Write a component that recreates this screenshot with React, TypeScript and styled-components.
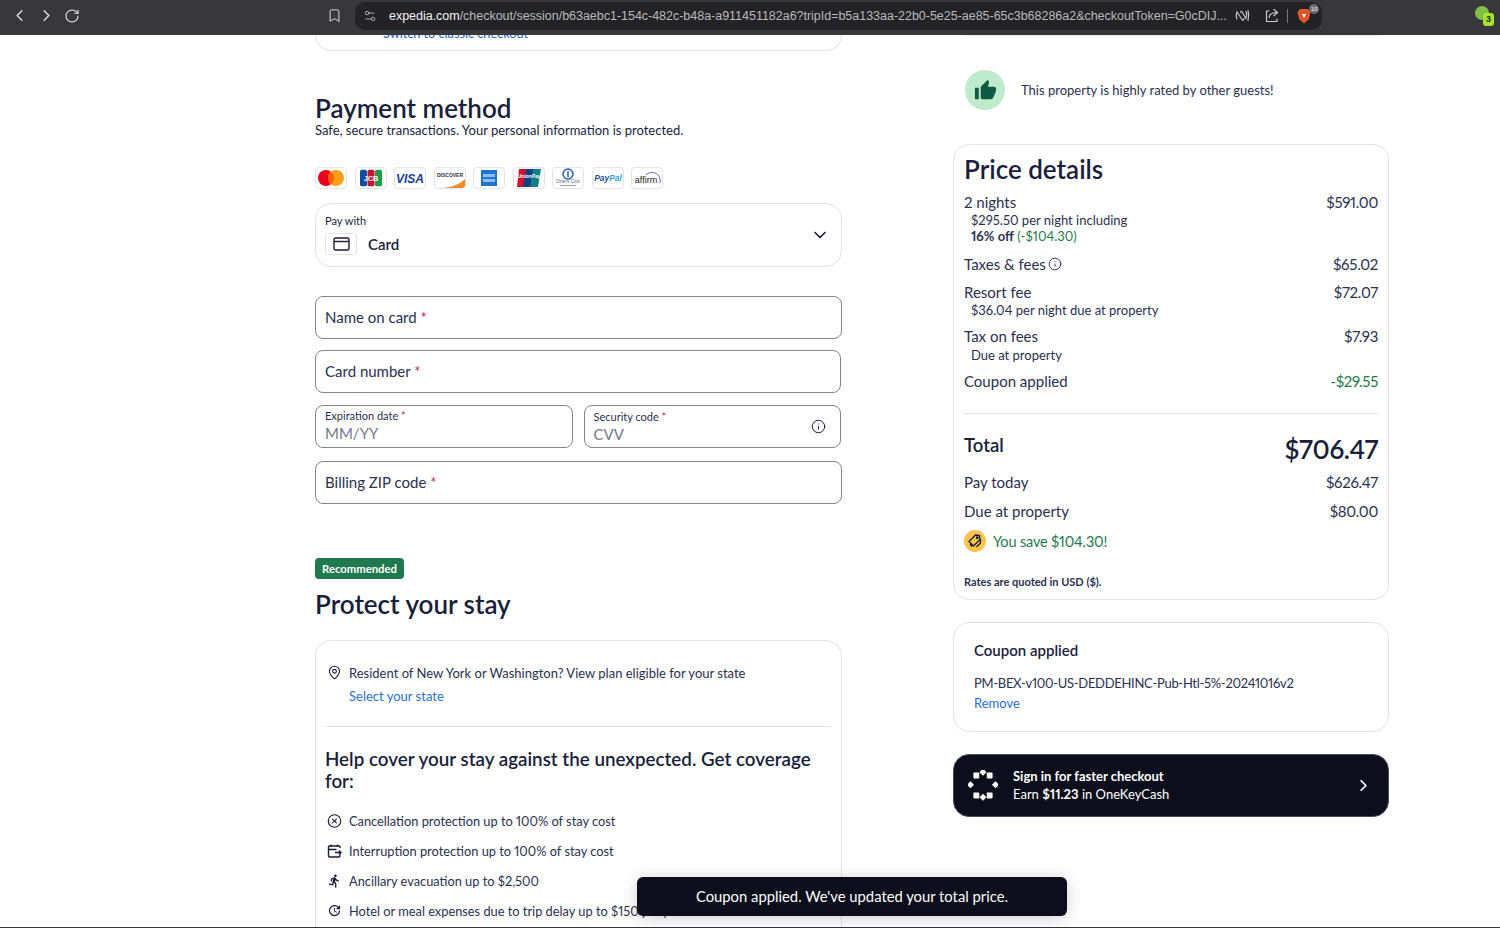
import styled, { createGlobalStyle } from "styled-components";
import {
  Bookmark,
  ChevronDown,
  ChevronLeft,
  ChevronRight,
  CircleX,
  Info,
  MapPin,
  RotateCw,
  Settings2,
} from "lucide-react";
import { MdDirectionsRun, MdThumbUp, MdUpdate } from "react-icons/md";

const FONT = `"Lato", "Noto Sans", sans-serif`;
const INK = "#191e3b";

const GlobalStyle = createGlobalStyle`
  html, body { margin: 0; padding: 0; background: #fff; height: 100%; overflow: hidden; }
  body { font-family: ${FONT}; color: ${INK}; font-variant-numeric: proportional-nums; }
  * { box-sizing: border-box; }
`;

const Page = styled.div`
  position: relative;
  width: 1500px;
  height: 928px;
  overflow: hidden;
  display: flex;
  flex-direction: column;
  border-bottom: 1px solid #33343a;
`;

const TopBar = styled.header`
  height: 35px;
  flex: none;
  background: #38383c;
  display: flex;
  align-items: center;
  padding: 0 6px 4px 10px;
  color: #e4e4e6;
`;

const NavIcons = styled.div`
  display: flex;
  align-items: center;
  gap: 8px;
  width: 317px;
`;

const UrlPill = styled.div`
  width: 967px;
  height: 28px;
  margin-left: 13px;
  background: #232327;
  border-radius: 10px;
  display: flex;
  align-items: center;
  padding: 0 3px 0 8px;
  font-family: "Liberation Sans", sans-serif;
  font-size: 12.5px;
  color: #b9b9bd;
  white-space: nowrap;
  overflow: hidden;
`;

const UrlText = styled.span`
  margin-left: 12px;
  flex: 1;
  letter-spacing: -0.02px;
  b { color: #f1f1f2; font-weight: 400; }
`;

const PillActions = styled.div`
  display: flex;
  align-items: center;
  gap: 14px;
`;

const PillDivider = styled.span`
  width: 1px;
  height: 14px;
  background: #77777c;
  margin: 0 9px 0 8px;
`;

const Shield = styled.div`
  position: relative;
  width: 22px;
  display: flex;
`;

const ShieldCount = styled.span`
  position: absolute;
  top: -4px;
  right: 0;
  width: 10px;
  height: 10px;
  border-radius: 50%;
  background: #6b6b72;
  color: #eee;
  font-size: 6px;
  line-height: 10px;
  text-align: center;
`;

const Extension = styled.div`
  position: relative;
  margin-left: auto;
  width: 19px;
  height: 21px;
`;

const ExtensionDot = styled.span`
  position: absolute;
  left: 0;
  top: 1px;
  width: 14px;
  height: 14px;
  border-radius: 50%;
  background: #7fbf45;
`;

const ExtensionCount = styled.span`
  position: absolute;
  right: 0;
  bottom: 0;
  width: 11px;
  height: 13px;
  border-radius: 3px;
  background: #a6e22e;
  color: #1c2a10;
  font: 700 9px/13px "Liberation Sans", sans-serif;
  text-align: center;
`;

const Content = styled.main`
  flex: 1;
  min-height: 0;
  display: flex;
  align-items: flex-start;
  padding-left: 315px;
`;

const LeftColumn = styled.section`
  width: 527px;
  flex: none;
  display: flex;
  flex-direction: column;
`;

const RightColumn = styled.aside`
  width: 436px;
  flex: none;
  margin-left: 111px;
  display: flex;
  flex-direction: column;
`;

const ClippedCard = styled.div`
  height: 16px;
  border: 1px solid #e3e3e6;
  border-top: 0;
  border-radius: 0 0 16px 16px;
  overflow: hidden;
  display: flex;
  align-items: flex-end;
  padding: 0 0 9px 67px;
  font-size: 12.7px;
  line-height: 16px;
  color: #2a5fc9;
`;

const SectionTitle = styled.h2<{ $top?: number }>`
  margin: ${(p) => p.$top ?? 0}px 0 0;
  font-size: 26px;
  line-height: 30px;
  font-weight: 600;
  color: ${INK};
`;

const Subtitle = styled.p`
  margin: 0;
  font-size: 13px;
  line-height: 15px;
`;

const LogoRow = styled.div`
  display: flex;
  gap: 7.5px;
  margin-top: 29px;
`;

const LogoTile = styled.div`
  width: 32px;
  height: 22px;
  border: 1px solid #e4e4e8;
  border-radius: 4px;
  background: #fff;
  display: flex;
  align-items: center;
  justify-content: center;
  overflow: hidden;
`;

const PayBox = styled.div`
  height: 64px;
  margin-top: 14px;
  border: 1px solid #e3e3e6;
  border-radius: 16px;
  padding: 10px 15px 0 9px;
  position: relative;
`;

const PayLabel = styled.div`
  font-size: 11px;
  line-height: 14px;
`;

const PayRow = styled.div`
  display: flex;
  align-items: center;
  gap: 11px;
  margin-top: 5px;
  font-size: 15px;
  font-weight: 600;
`;

const CardTile = styled.div`
  width: 32px;
  height: 22px;
  border: 1px solid #e4e4e8;
  border-radius: 4px;
  display: flex;
  align-items: center;
  justify-content: center;
`;

const PayChevron = styled.div`
  position: absolute;
  right: 11px;
  top: 21px;
  display: flex;
`;

const FieldBox = styled.div<{ $top?: number; $inset?: number }>`
  height: 43px;
  margin: ${(p) => p.$top ?? 0}px ${(p) => p.$inset ?? 0}px 0 0;
  border: 1px solid #85858f;
  border-radius: 8px;
  padding: 0 9px 2px;
  display: flex;
  align-items: center;
  font-size: 15px;
  color: #2b3050;
  position: relative;
`;

const PairField = styled(FieldBox)`
  flex: 1 1 0;
`;

const Star = styled.span`
  color: #c4254a;
`;

const FieldPair = styled.div`
  display: flex;
  gap: 11px;
  margin: 12px 1px 0 0;
`;

const StackedField = styled.div<{ $shift?: number }>`
  display: flex;
  flex-direction: column;
  transform: translateY(${(p) => p.$shift ?? 0}px);
`;

const SmallLabel = styled.span`
  font-size: 11px;
  line-height: 13px;
`;

const Placeholder = styled.span`
  font-size: 15px;
  line-height: 22px;
  color: #75778a;
`;

const FieldIcon = styled.div`
  position: absolute;
  right: 14px;
  top: 13px;
  display: flex;
`;

const Badge = styled.div`
  align-self: flex-start;
  margin-top: 54px;
  height: 21px;
  padding: 0 7px;
  border-radius: 4px;
  background: #1f7a50;
  color: #fff;
  font-size: 11.3px;
  font-weight: 700;
  line-height: 21px;
`;

const ProtectCard = styled.div`
  margin-top: 21px;
  height: 320px;
  border: 1px solid #e3e3e6;
  border-bottom: 0;
  border-radius: 16px 16px 0 0;
  padding: 24px 10px 0 9px;
`;

const StateRow = styled.div`
  display: flex;
  gap: 7px;
  padding-left: 2px;
  font-size: 13px;
  line-height: 16px;
  color: #2b3050;
`;

const TextLink = styled.a<{ $top?: number }>`
  display: block;
  margin-top: ${(p) => p.$top ?? 0}px;
  font-size: 13px;
  line-height: 16px;
  color: #2a6fd0;
`;

const CardDivider = styled.hr<{ $top: number; $bottom: number }>`
  border: 0;
  height: 1px;
  background: #e3e3e6;
  margin: ${(p) => p.$top}px 0 ${(p) => p.$bottom}px;
`;

const CoverTitle = styled.h3`
  margin: 0;
  font-size: 18.8px;
  line-height: 22px;
  font-weight: 600;
`;

const BenefitList = styled.ul`
  list-style: none;
  margin: 20.5px 0 0;
  padding: 0 0 0 2px;
  display: flex;
  flex-direction: column;
  gap: 14.1px;
`;

const Benefit = styled.li`
  display: flex;
  align-items: center;
  gap: 7px;
  height: 16px;
  font-size: 12.8px;
  color: #2b3050;
  white-space: nowrap;
`;

const BenefitIcon = styled.span`
  width: 15px;
  display: flex;
  justify-content: center;
`;

const RatedRow = styled.div`
  margin-top: 34px;
  height: 40px;
  display: flex;
  align-items: center;
  gap: 16px;
  padding-left: 12px;
  font-size: 13px;
  color: #2b3050;
`;

const ThumbCircle = styled.div`
  width: 40px;
  height: 40px;
  border-radius: 50%;
  background: #bfeacb;
  color: #0f5a42;
  display: flex;
  align-items: center;
  justify-content: center;
`;

const FadedRule = styled.div`
  height: 1px;
  background: #eeeef0;
  margin: 0 11px;
`;

const PriceCard = styled.div`
  margin-top: 34px;
  height: 456px;
  border: 1px solid #e3e3e6;
  border-radius: 16px;
  padding: 9px 10px 0;
`;

const PriceRow = styled.div<{ $top?: number }>`
  display: flex;
  justify-content: space-between;
  align-items: flex-start;
  margin-top: ${(p) => p.$top ?? 0}px;
  font-size: 15px;
  line-height: 18px;
  color: #2b3050;
`;

const RowLabel = styled.span`
  display: inline-flex;
  align-items: center;
  gap: 2px;
`;

const Amount = styled.span<{ $green?: boolean }>`
  letter-spacing: -0.3px;
  color: ${(p) => (p.$green ? "#1f7a50" : "#2b3050")};
`;

const Note = styled.div<{ $top?: number }>`
  margin-top: ${(p) => p.$top ?? 0}px;
  padding-left: 7px;
  font-size: 13px;
  line-height: 16px;
  color: #2b3050;
  strong { font-weight: 700; }
  em { font-style: normal; color: #1f7a50; }
`;

const TotalRow = styled.div`
  display: flex;
  justify-content: space-between;
  align-items: flex-start;
  margin-top: 20px;
`;

const TotalLabel = styled.span`
  font-size: 18.5px;
  line-height: 22px;
  font-weight: 600;
`;

const TotalValue = styled.span`
  font-size: 26px;
  line-height: 30px;
  font-weight: 600;
  letter-spacing: -0.4px;
`;

const SaveRow = styled.div`
  display: flex;
  align-items: center;
  gap: 7px;
  margin-top: 10px;
  font-size: 14.5px;
  letter-spacing: -0.15px;
  color: #1f7a50;
`;

const SaveIcon = styled.span`
  width: 22px;
  height: 22px;
  border-radius: 50%;
  background: #fcc44d;
  display: flex;
  align-items: center;
  justify-content: center;
`;

const RatesNote = styled.div`
  margin-top: 23px;
  font-size: 11px;
  line-height: 14px;
  font-weight: 700;
  color: #2b3050;
`;

const CouponCard = styled.div`
  margin-top: 22px;
  height: 110px;
  border: 1px solid #e3e3e6;
  border-radius: 16px;
  padding: 18px 20px 0;
`;

const CouponTitle = styled.div`
  font-size: 15px;
  line-height: 18px;
  font-weight: 600;
`;

const CouponCode = styled.div`
  margin-top: 16px;
  font-size: 13px;
  line-height: 16px;
  letter-spacing: -0.3px;
  color: #2b3050;
`;

const SignInBanner = styled.div`
  margin-top: 22px;
  height: 63px;
  border-radius: 16px;
  background: #0c0e1c;
  border: 1px solid #4a4b5c;
  color: #fff;
  display: flex;
  align-items: center;
  padding: 0 15px 0 14px;
`;

const SignInText = styled.div`
  margin: 0 0 2px 15px;
  flex: 1;
  font-size: 13px;
  line-height: 18px;
  b { font-weight: 700; }
`;

const Toast = styled.div`
  position: absolute;
  left: 637px;
  top: 877px;
  width: 430px;
  height: 39px;
  border-radius: 6px;
  background: #0c0e1c;
  color: #fff;
  font-size: 14.8px;
  line-height: 39px;
  text-align: center;
  box-shadow: 0 2px 16px rgba(12, 14, 28, 0.2);
`;

function MastercardLogo() {
  return (
    <svg width="28" height="18" viewBox="0 0 28 18">
      <circle cx="9" cy="9" r="8" fill="#eb001b" />
      <circle cx="19" cy="9" r="8" fill="#f79e1b" />
      <path d="M14 2.7a8 8 0 0 1 0 12.6 8 8 0 0 1 0-12.6z" fill="#ff5f00" />
    </svg>
  );
}

function JcbLogo() {
  return (
    <svg width="22" height="18" viewBox="0 0 24 18">
      <rect x="0" y="0" width="7.6" height="18" rx="2" fill="#0b4ea2" />
      <rect x="8.2" y="0" width="7.6" height="18" rx="2" fill="#c8102e" />
      <rect x="16.4" y="0" width="7.6" height="18" rx="2" fill="#1f9a46" />
      <text x="12" y="12" textAnchor="middle" fontFamily="Liberation Sans" fontSize="8" fontWeight="700" fill="#fff">JCB</text>
    </svg>
  );
}

function VisaLogo() {
  return (
    <svg width="28" height="14" viewBox="0 0 28 14">
      <text x="14" y="11.5" textAnchor="middle" fontFamily="Liberation Sans" fontSize="12" fontStyle="italic" fontWeight="700" fill="#1a3f94">VISA</text>
    </svg>
  );
}

function DiscoverLogo() {
  return (
    <svg width="30" height="20" viewBox="0 0 30 20">
      <text x="15" y="9" textAnchor="middle" fontFamily="Liberation Sans" fontSize="5" fontWeight="700" fill="#333">DISCOVER</text>
      <path d="M30 11v9H8c10-1 17-4 22-9z" fill="#f08a24" />
    </svg>
  );
}

function AmexLogo() {
  return (
    <svg width="16" height="16" viewBox="0 0 16 16">
      <rect width="16" height="16" fill="#1f72cd" />
      <rect x="2" y="4" width="12" height="3" fill="#8fbdea" />
      <rect x="2" y="9" width="12" height="3" fill="#8fbdea" />
    </svg>
  );
}

function UnionPayLogo() {
  return (
    <svg width="26" height="18" viewBox="0 0 26 18">
      <path d="M3 0h8L8 18H1z" fill="#d0142c" />
      <path d="M10 0h8l-3 18H7z" fill="#0b3f86" />
      <path d="M17 0h8l-3 18h-8z" fill="#0f7f83" />
      <text x="13" y="9" textAnchor="middle" fontFamily="Liberation Sans" fontSize="5" fontWeight="700" fontStyle="italic" fill="#fff">UnionPay</text>
    </svg>
  );
}

function DinersLogo() {
  return (
    <svg width="26" height="20" viewBox="0 0 26 20">
      <circle cx="13" cy="6" r="5" fill="none" stroke="#1d5fa8" strokeWidth="1.4" />
      <rect x="12.3" y="3" width="1.4" height="6" fill="#1d5fa8" />
      <text x="13" y="15" textAnchor="middle" fontFamily="Liberation Sans" fontSize="4.5" fill="#667">Diners Club</text>
      <rect x="5" y="17" width="16" height="1" fill="#99a" />
    </svg>
  );
}

function PaypalLogo() {
  return (
    <svg width="30" height="12" viewBox="0 0 30 12">
      <text x="15" y="9" textAnchor="middle" fontFamily="Liberation Sans" fontSize="8.4" fontStyle="italic" fontWeight="700" fill="#1f4f96">
        Pay<tspan fill="#2d9fd9">Pal</tspan>
      </text>
    </svg>
  );
}

function AffirmLogo() {
  return (
    <svg width="28" height="16" viewBox="0 0 28 16">
      <path d="M13 5c3-4 12-4 14 4 .3 1.4.3 3 0 4" fill="none" stroke="#6d5ce8" strokeWidth="1" />
      <text x="13" y="13" textAnchor="middle" fontFamily="Liberation Sans" fontSize="9" fill="#222">affirm</text>
    </svg>
  );
}

function CalendarShiftIcon() {
  return (
    <svg width="16" height="16" viewBox="0 0 15 15" fill="none" stroke={INK} strokeWidth="1.4">
      <path d="M13 4.5V3.5a1 1 0 0 0-1-1H2.5a1 1 0 0 0-1 1v9a1 1 0 0 0 1 1H12a1 1 0 0 0 1-1v-1.5" />
      <path d="M1.5 6h8M4 1v2.5M10.5 1v2.5M8 9h6M12 7l2 2-2 2" />
    </svg>
  );
}

function TagIcon() {
  return (
    <svg width="16" height="16" viewBox="0 0 16 16" fill="none" stroke={INK} strokeWidth="1.3" strokeLinejoin="round">
      <path d="M2 8.5 8.5 2l4 .5.5 4L6.5 13z" />
      <path d="M5 13.5 3 11M13.5 6v4l-4 4" />
      <circle cx="10.3" cy="4.8" r="0.8" />
    </svg>
  );
}

function OneKeyLogo() {
  const squares = [
    [10, 5],
    [26, 5],
    [26, 29],
    [10, 29],
  ];
  const diamonds = [
    [18, 2],
    [3, 17],
    [18, 32],
    [33, 17],
  ];
  return (
    <svg width="30" height="31" viewBox="0 0 36 36" fill="#fff">
      {squares.map(([x, y]) => (
        <rect key={`${x}-${y}`} x={x - 3.5} y={y - 2.5} width="7" height="7" rx="1" />
      ))}
      {diamonds.map(([x, y]) => (
        <rect key={`${x}-${y}`} x={x - 3} y={y - 3} width="6" height="6" transform={`rotate(45 ${x} ${y})`} />
      ))}
    </svg>
  );
}

function BraveIcon() {
  return (
    <svg width="14" height="16" viewBox="0 0 14 16">
      <path d="M3 1h8l2.5 3-1.5 7-5 4.5L2 11 .5 4z" fill="#e2542a" />
      <path d="M5 6h4L7 10z" fill="#fff" />
    </svg>
  );
}

function NfcSlashIcon() {
  return (
    <svg width="15" height="15" viewBox="0 0 15 15" fill="none" stroke="#c9c9cd" strokeWidth="1.2" strokeLinecap="round">
      <path d="M2 11c-.8-2-.8-5 0-7l5 7.5c1 1.2 1.5.5 2-1" />
      <path d="M5.5 4c.5-.8 1-.8 1.5 0l4 6.5c.8-2 .8-5 0-7M13 2.5c.8 3 .8 7 0 10" />
    </svg>
  );
}

function ShareBoxIcon() {
  return (
    <svg width="15" height="15" viewBox="0 0 15 15" fill="none" stroke="#c9c9cd" strokeWidth="1.2" strokeLinecap="round" strokeLinejoin="round">
      <path d="M5 3H2.5v10.5H13V11" />
      <path d="M5 9.5C5.5 6 8 4.5 13 4.5M10 1.5l3.5 3-3.5 3" />
    </svg>
  );
}

export default function App() {
  return (
    <Page>
      <GlobalStyle />
      <TopBar>
        <NavIcons>
          <ChevronLeft size={19} strokeWidth={1.6} />
          <ChevronRight size={19} strokeWidth={1.6} />
          <RotateCw size={16} strokeWidth={1.6} />
        </NavIcons>
        <Bookmark size={15} strokeWidth={1.5} />
        <UrlPill>
          <Settings2 size={14} strokeWidth={1.5} />
          <UrlText>
            <b>expedia.com</b>/checkout/session/b63aebc1-154c-482c-b48a-a911451182a6?tripId=b5a133aa-22b0-5e25-ae85-65c3b68286a2&amp;checkoutToken=G0cDIJ...
          </UrlText>
          <PillActions>
            <NfcSlashIcon />
            <ShareBoxIcon />
          </PillActions>
          <PillDivider />
          <Shield>
            <BraveIcon />
            <ShieldCount>10</ShieldCount>
          </Shield>
        </UrlPill>
        <Extension>
          <ExtensionDot />
          <ExtensionCount>3</ExtensionCount>
        </Extension>
      </TopBar>

      <Content>
        <LeftColumn>
          <ClippedCard>Switch to classic checkout</ClippedCard>
          <SectionTitle $top={42}>Payment method</SectionTitle>
          <Subtitle>Safe, secure transactions. Your personal information is protected.</Subtitle>
          <LogoRow>
            <LogoTile><MastercardLogo /></LogoTile>
            <LogoTile><JcbLogo /></LogoTile>
            <LogoTile><VisaLogo /></LogoTile>
            <LogoTile><DiscoverLogo /></LogoTile>
            <LogoTile><AmexLogo /></LogoTile>
            <LogoTile><UnionPayLogo /></LogoTile>
            <LogoTile><DinersLogo /></LogoTile>
            <LogoTile><PaypalLogo /></LogoTile>
            <LogoTile><AffirmLogo /></LogoTile>
          </LogoRow>
          <PayBox>
            <PayLabel>Pay with</PayLabel>
            <PayRow>
              <CardTile>
                <svg width="17" height="14" viewBox="0 0 17 14" fill="none" stroke={INK} strokeWidth="1.4">
                  <rect x="1" y="1" width="15" height="12" rx="1.5" />
                  <path d="M1 4.5h15" />
                </svg>
              </CardTile>
              Card
            </PayRow>
            <PayChevron><ChevronDown size={20} strokeWidth={2} /></PayChevron>
          </PayBox>

          <FieldBox $top={29}>Name on card&nbsp;<Star>*</Star></FieldBox>
          <FieldBox $top={11} $inset={1}>Card number&nbsp;<Star>*</Star></FieldBox>
          <FieldPair>
            <PairField>
              <StackedField $shift={1}>
                <SmallLabel>Expiration date <Star>*</Star></SmallLabel>
                <Placeholder>MM/YY</Placeholder>
              </StackedField>
            </PairField>
            <PairField>
              <StackedField $shift={2}>
                <SmallLabel>Security code <Star>*</Star></SmallLabel>
                <Placeholder>CVV</Placeholder>
              </StackedField>
              <FieldIcon><Info size={15} strokeWidth={1.6} color={INK} /></FieldIcon>
            </PairField>
          </FieldPair>
          <FieldBox $top={13}>Billing ZIP code&nbsp;<Star>*</Star></FieldBox>

          <Badge>Recommended</Badge>
          <SectionTitle $top={10}>Protect your stay</SectionTitle>

          <ProtectCard>
            <StateRow>
              <MapPin size={15} strokeWidth={1.7} color={INK} />
              <div>
                Resident of New York or Washington? View plan eligible for your state
                <TextLink $top={7}>Select your state</TextLink>
              </div>
            </StateRow>
            <CardDivider $top={22} $bottom={21} />
            <CoverTitle>Help cover your stay against the unexpected. Get coverage for:</CoverTitle>
            <BenefitList>
              <Benefit>
                <BenefitIcon><CircleX size={16} strokeWidth={1.8} color={INK} /></BenefitIcon>
                Cancellation protection up to 100% of stay cost
              </Benefit>
              <Benefit>
                <BenefitIcon><CalendarShiftIcon /></BenefitIcon>
                Interruption protection up to 100% of stay cost
              </Benefit>
              <Benefit>
                <BenefitIcon><MdDirectionsRun size={18} color={INK} /></BenefitIcon>
                Ancillary evacuation up to $2,500
              </Benefit>
              <Benefit>
                <BenefitIcon><MdUpdate size={19} color={INK} /></BenefitIcon>
                Hotel or meal expenses due to trip delay up to $150 per person
              </Benefit>
            </BenefitList>
          </ProtectCard>
        </LeftColumn>

        <RightColumn>
          <FadedRule />
          <RatedRow>
            <ThumbCircle><MdThumbUp size={23} /></ThumbCircle>
            This property is highly rated by other guests!
          </RatedRow>
          <PriceCard>
            <SectionTitle>Price details</SectionTitle>
            <PriceRow $top={9}><span>2 nights</span><Amount>$591.00</Amount></PriceRow>
            <Note $top={1}>$295.50 per night including</Note>
            <Note><strong>16% off</strong> <em>(-$104.30)</em></Note>
            <PriceRow $top={11}>
              <RowLabel>Taxes &amp; fees <Info size={14} strokeWidth={1.6} /></RowLabel>
              <Amount>$65.02</Amount>
            </PriceRow>
            <PriceRow $top={10}><span>Resort fee</span><Amount>$72.07</Amount></PriceRow>
            <Note $top={1}>$36.04 per night due at property</Note>
            <PriceRow $top={9}><span>Tax on fees</span><Amount>$7.93</Amount></PriceRow>
            <Note $top={2}>Due at property</Note>
            <PriceRow $top={9}><span>Coupon applied</span><Amount $green>-$29.55</Amount></PriceRow>
            <CardDivider $top={23} $bottom={0} />
            <TotalRow>
              <TotalLabel>Total</TotalLabel>
              <TotalValue>$706.47</TotalValue>
            </TotalRow>
            <PriceRow $top={9}><span>Pay today</span><Amount>$626.47</Amount></PriceRow>
            <PriceRow $top={11}><span>Due at property</span><Amount>$80.00</Amount></PriceRow>
            <SaveRow>
              <SaveIcon><TagIcon /></SaveIcon>
              You save $104.30!
            </SaveRow>
            <RatesNote>Rates are quoted in USD ($).</RatesNote>
          </PriceCard>
          <CouponCard>
            <CouponTitle>Coupon applied</CouponTitle>
            <CouponCode>PM-BEX-v100-US-DEDDEHINC-Pub-Htl-5%-20241016v2</CouponCode>
            <TextLink $top={4}>Remove</TextLink>
          </CouponCard>
          <SignInBanner>
            <OneKeyLogo />
            <SignInText>
              <b>Sign in for faster checkout</b>
              <br />
              Earn <b>$11.23</b> in OneKeyCash
            </SignInText>
            <ChevronRight size={19} strokeWidth={2.2} />
          </SignInBanner>
        </RightColumn>
      </Content>

      <Toast>Coupon applied. We've updated your total price.</Toast>
    </Page>
  );
}
